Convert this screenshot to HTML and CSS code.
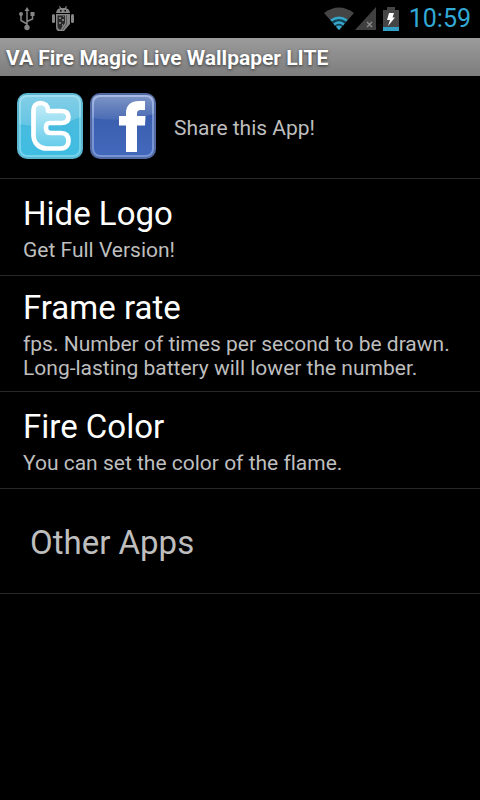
FILE: index.html
```html
<!DOCTYPE html>
<html lang="en">
<head>
<meta charset="utf-8">
<meta name="viewport" content="width=device-width, initial-scale=1">
<title>VA Fire Magic Live Wallpaper LITE</title>
<link rel="stylesheet" href="styles.css">
</head>
<body>
<div class="status-bar">
  <div class="notifications">
    <svg class="usb" width="18" height="24" viewBox="0 0 18 24" fill="none" stroke="#858585" stroke-width="1.500">
      <path d="M9 3V20M9 17L3 13.500V8M9 14.500L14.500 12V8"/>
      <path d="M9 0L11.500 4H6.500Z" fill="#858585" stroke="none"/>
      <circle cx="9" cy="20.500" r="2.700" fill="#858585" stroke="none"/>
      <circle cx="3" cy="7" r="2" fill="#858585" stroke="none"/>
      <path d="M12.500 5H16.500V9H12.500Z" fill="#858585" stroke="none"/>
    </svg>
    <svg class="debug" width="24" height="26" viewBox="0 0 24 26">
      <path d="M5 7Q5.500 3 9 2.300L8 .5L9 0L10.200 2H13.800L15 0L16 .5L15 2.300Q18.500 3 19 7Z" fill="#858585"/>
      <path d="M9 4h1.500v1.500H9zM13.500 4H15v1.500h-1.500z" fill="#000"/>
      <rect x="1" y="8" width="3" height="9" rx="1.500" fill="#858585"/>
      <rect x="20" y="8" width="3" height="9" rx="1.500" fill="#858585"/>
      <path d="M5 8H19V18L13 25H7Q5 24 5 21Z" fill="#858585"/>
      <path d="M6.500 9.500H14V17L11 21L10 23.500H8L6.500 21Z" fill="#292929"/>
      <path d="M8 11h2v2H8zM11 13h2v2h-2zM8 16h2v2H8zM11 18h1v2h-1zM12 10h1v1h-1z" fill="#777"/>
      <path d="M15.500 9V18L11.500 24" fill="none" stroke="#444" stroke-width=".7"/>
    </svg>
  </div>
  <div class="system">
    <svg class="wifi" width="32" height="24" viewBox="0 0 32 24">
      <path d="M1 6Q16-5 31 6L16 23Z" fill="#454545"/>
      <path d="M8 14Q16 8 24 14L16 23Z" fill="#123f50"/>
      <g fill="none" stroke="#35a5c9" stroke-width="2.300">
        <path d="M8 13.500Q16 8 24 13.500"/>
        <path d="M11 17.500Q16 13.500 21 17.500"/>
      </g>
      <path d="M13 19.700Q16 17.500 19 19.700L16 23Z" fill="#35a5c9"/>
    </svg>
    <svg class="signal" width="21" height="24" viewBox="0 0 21 24">
      <path d="M21 0V23H0Z" fill="#404040"/>
      <path d="M12 15L17 20M17 15L12 20" stroke="#8b8b8b" stroke-width="1.400"/>
    </svg>
    <svg class="battery" width="16" height="24" viewBox="0 0 16 24">
      <path d="M0 3H4V0H12V3H16V20H0Z" fill="#454545"/>
      <path d="M0 20H16V24H0Z" fill="#339fc4"/>
      <path d="M6 6H11L9.500 10.500H12L5 19L7 13H4Z" fill="#fff"/>
    </svg>
    <time class="clock">10:59</time>
  </div>
</div>
<header class="title-bar"><h1>VA Fire Magic Live Wallpaper LITE</h1></header>
<main class="settings">
  <section class="share">
    <a class="share-link" href="#twitter" aria-label="Twitter">
      <svg width="68" height="68" viewBox="0 0 68 68">
        <defs>
          <linearGradient id="tw" x2="0" y2="1"><stop offset="0" stop-color="#4fb9dc"/><stop offset="1" stop-color="#3fbde2"/></linearGradient>
          <linearGradient id="twShine" x2="0" y2="1"><stop offset="0" stop-color="#fff" stop-opacity=".3"/><stop offset="1" stop-color="#fff" stop-opacity=".16"/></linearGradient>
          <linearGradient id="twLetter" x2="0" y2="1"><stop offset="0" stop-color="#c5edf8"/><stop offset="1" stop-color="#62cbe9"/></linearGradient>
        </defs>
        <rect x="2" y="2" width="64" height="64" rx="9" fill="url(#tw)" stroke="#5bb5cf" stroke-width="2"/>
        <rect x="4" y="4" width="60" height="60" rx="7" fill="none" stroke="#74d2ea" stroke-width="2"/>
        <path d="M3 10Q3 3 10 3H58Q65 3 65 10V25Q34 38 3 32Z" fill="url(#twShine)"/>
        <path d="M24.500 11C20 11 17.500 14 17.500 18V43C17.500 51 23 56.500 31 56.500H45C50 56.500 52.500 53 52.500 49C52.500 44 50 41 45 41H35C31 41 30 39 30 36C30 32 31 31 34 31H45C50 31 52.500 29 52.500 25C52.500 21 50 19 45 19H32V18C32 14 29 11 24.500 11Z" fill="url(#twLetter)" stroke="#fff" stroke-width="4.700" stroke-linejoin="round"/>
      </svg>
    </a>
    <a class="share-link" href="#facebook" aria-label="Facebook">
      <svg width="68" height="68" viewBox="0 0 68 68">
        <defs>
          <linearGradient id="fb" x2="0" y2="1"><stop offset="0" stop-color="#3659a5"/><stop offset="1" stop-color="#4369be"/></linearGradient>
          <linearGradient id="fbShine" x2="0" y2="1"><stop offset="0" stop-color="#fff" stop-opacity=".36"/><stop offset="1" stop-color="#fff" stop-opacity=".08"/></linearGradient>
        </defs>
        <rect x="2" y="2" width="64" height="64" rx="9" fill="url(#fb)" stroke="#5269a1" stroke-width="2"/>
        <rect x="4" y="4" width="60" height="60" rx="7" fill="none" stroke="#7795d5" stroke-width="2"/>
        <path d="M3 10Q3 3 10 3H58Q65 3 65 10V22Q34 31 3 26Z" fill="url(#fbShine)"/>
        <path d="M37 60V33.500H30V24H37V21C37 13 42 9 50 9H56V18H52C49 18 48 19 48 22V24H56.500L56 33.500H48V60Z" fill="#fff"/>
      </svg>
    </a>
    <span class="share-label">Share this App!</span>
  </section>
  <button class="row" type="button">
    <span class="row-title">Hide Logo</span>
    <span class="summary">Get Full Version!</span>
  </button>
  <button class="row" type="button">
    <span class="row-title">Frame rate</span>
    <span class="summary">fps. Number of times per second to be drawn. Long-lasting battery will lower the number.</span>
  </button>
  <button class="row" type="button">
    <span class="row-title">Fire Color</span>
    <span class="summary">You can set the color of the flame.</span>
  </button>
  <button class="row other" type="button">Other Apps</button>
</main>
</body>
</html>
```
FILE: styles.css
```css
* {
  box-sizing: border-box;
}

body {
  margin: 0;
  min-height: 100vh;
  background: #000;
  color: #fff;
  font-family: Roboto, "Liberation Sans", sans-serif;
  font-variant-ligatures: none;
}

svg {
  display: block;
}

.status-bar {
  display: flex;
  justify-content: space-between;
  height: 38px;
  padding: 0 9px 0 18px;
}

.notifications,
.system {
  display: flex;
  align-items: center;
}

.notifications {
  gap: 15px;
}

.battery {
  margin: 0 10px 0 7px;
}

.clock {
  color: #33a9d5;
  font-size: 25px;
  line-height: 40px;
}

.title-bar {
  height: 38px;
  padding: 0 6px;
  background: linear-gradient(#9b9b9b, #7d7d7d);
}

.title-bar h1 {
  margin: 0;
  font-size: 21px;
  font-weight: 700;
  line-height: 40px;
  text-shadow: 0 1px 3px #333;
}

.settings {
  display: flex;
  flex-direction: column;
}

.share {
  display: flex;
  align-items: center;
  gap: 5px;
  min-height: 103px;
  padding: 0 16px 2px;
  border-bottom: 1px solid #282828;
}

.share-label {
  padding-top: 4px;
  margin-left: 12px;
  color: #bebebe;
  font-size: 21px;
}

.row {
  display: flex;
  flex-direction: column;
  justify-content: center;
  gap: 4px;
  min-height: 97px;
  padding: 12px 23px 11px;
  border: 0;
  border-bottom: 1px solid #282828;
  background: none;
  color: #fff;
  font: inherit;
  font-variant-ligatures: none;
  text-align: left;
}

.row-title {
  font-size: 33px;
  line-height: 40px;
}

.summary {
  color: #bebebe;
  font-size: 21px;
  line-height: 24px;
}

.other {
  min-height: 105px;
  padding: 2px 30px 0;
  color: #bebebe;
  font-size: 33px;
}
```
